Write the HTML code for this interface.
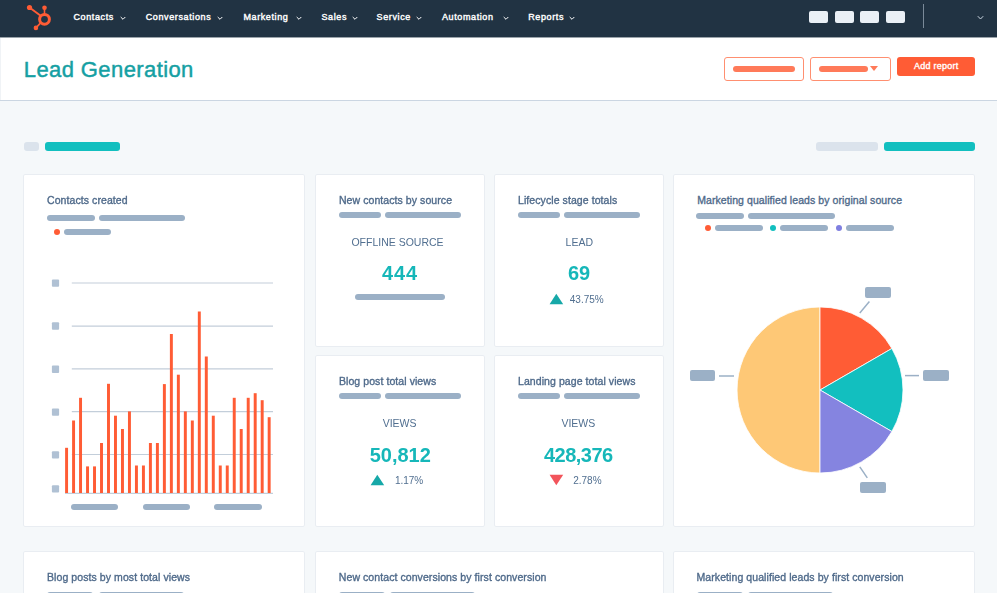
<!DOCTYPE html><html><head><meta charset="utf-8"><style>
*{box-sizing:border-box;margin:0;padding:0}
html,body{width:997px;height:593px;overflow:hidden;background:#f5f8fa;font-family:"Liberation Sans",sans-serif;position:relative}
.a{position:absolute}
.nl{position:absolute;top:10.7px;color:#fff;font-size:9px;font-weight:400;line-height:12px;white-space:nowrap;letter-spacing:0.62px;-webkit-text-stroke:0.4px #fff}
.sq{position:absolute;top:11px;width:19px;height:12px;background:#eaf0f6;border-radius:2px}
.btn{position:absolute;top:57px;height:24px;border:1px solid #ff8f70;border-radius:3px;background:#fff}
.p{position:absolute;border-radius:3px;background:#9bb0c6;height:6px}
.card{position:absolute;background:#fff;border:1px solid #e9edf2;border-radius:2px}
.ct{position:absolute;font-size:10.5px;font-weight:400;color:#4f6a8a;white-space:nowrap;line-height:12px;-webkit-text-stroke:0.35px #4f6a8a;letter-spacing:0.08px}
.lbl{position:absolute;font-size:10.5px;color:#516f90;white-space:nowrap;line-height:12px}
.big{position:absolute;font-size:20px;font-weight:700;color:#16b7b9;white-space:nowrap;line-height:20px}
.pct{position:absolute;font-size:10px;color:#516f90;white-space:nowrap;line-height:12px;margin-top:1.3px}
.tk{position:absolute;left:52px;width:7px;height:7px;background:#b0c1d4;border-radius:1px}
.gl{position:absolute;left:72px;width:201px;height:1px;background:#c8d3df}
.bar{position:absolute;width:3px;background:#ff5c35}
</style></head><body><div id="w" style="position:absolute;left:0;top:0;width:997px;height:593px;overflow:hidden;filter:blur(0.35px)">
<div class="a" style="left:0;top:0;width:997px;height:37px;background:#213343"></div>
<svg class="a" style="left:0;top:0" width="70" height="37" viewBox="0 0 70 37">
<g fill="#ff5c35" stroke="#ff5c35">
<circle cx="44.5" cy="19.3" r="4.9" fill="none" stroke-width="3"/>
<circle cx="29.5" cy="7.5" r="2.6" stroke="none"/>
<circle cx="44.5" cy="7.8" r="2.3" stroke="none"/>
<circle cx="35.9" cy="27.9" r="2.3" stroke="none"/>
<line x1="29.5" y1="7.5" x2="41" y2="16" stroke-width="2"/>
<line x1="44.5" y1="7.8" x2="44.5" y2="14" stroke-width="1.6"/>
<line x1="35.9" y1="27.9" x2="41" y2="22.5" stroke-width="1.8"/>
</g></svg>
<div class="nl" style="left:73.5px">Contacts</div>
<svg class="a" style="left:120px;top:15.6px" width="6" height="5" viewBox="0 0 6 5"><path d="M0.7 1 L3 3.3 L5.3 1" fill="none" stroke="#fff" stroke-width="1"/></svg>
<div class="nl" style="left:145.7px">Conversations</div>
<svg class="a" style="left:217px;top:15.6px" width="6" height="5" viewBox="0 0 6 5"><path d="M0.7 1 L3 3.3 L5.3 1" fill="none" stroke="#fff" stroke-width="1"/></svg>
<div class="nl" style="left:243.4px">Marketing</div>
<svg class="a" style="left:296px;top:15.6px" width="6" height="5" viewBox="0 0 6 5"><path d="M0.7 1 L3 3.3 L5.3 1" fill="none" stroke="#fff" stroke-width="1"/></svg>
<div class="nl" style="left:321.5px">Sales</div>
<svg class="a" style="left:351.6px;top:15.6px" width="6" height="5" viewBox="0 0 6 5"><path d="M0.7 1 L3 3.3 L5.3 1" fill="none" stroke="#fff" stroke-width="1"/></svg>
<div class="nl" style="left:376.6px">Service</div>
<svg class="a" style="left:416px;top:15.6px" width="6" height="5" viewBox="0 0 6 5"><path d="M0.7 1 L3 3.3 L5.3 1" fill="none" stroke="#fff" stroke-width="1"/></svg>
<div class="nl" style="left:441.9px">Automation</div>
<svg class="a" style="left:502.7px;top:15.6px" width="6" height="5" viewBox="0 0 6 5"><path d="M0.7 1 L3 3.3 L5.3 1" fill="none" stroke="#fff" stroke-width="1"/></svg>
<div class="nl" style="left:528.2px">Reports</div>
<svg class="a" style="left:569px;top:15.6px" width="6" height="5" viewBox="0 0 6 5"><path d="M0.7 1 L3 3.3 L5.3 1" fill="none" stroke="#fff" stroke-width="1"/></svg>
<div class="sq" style="left:809.4px"></div>
<div class="sq" style="left:835px"></div>
<div class="sq" style="left:860px"></div>
<div class="sq" style="left:886px"></div>
<div class="a" style="left:922.5px;top:4px;width:1px;height:24px;background:#7a8a99"></div>
<svg class="a" style="left:977px;top:15px" width="7" height="6" viewBox="0 0 7 6"><path d="M0.8 1.2 L3.5 4 L6.2 1.2" fill="none" stroke="#cbd6e2" stroke-width="1"/></svg>
<div class="a" style="left:0;top:37px;width:997px;height:64px;background:#fff;border-bottom:1px solid #cbd6e2"></div>
<div class="a" style="left:0;top:37px;width:997px;height:1px;background:#9aa3aa"></div>
<div class="a" style="left:0;top:38px;width:1px;height:62px;background:#f0f3f6"></div>
<div class="a" style="left:23.8px;top:55px;font-size:22px;color:#15a0a3;line-height:30px;white-space:nowrap;letter-spacing:0.4px;-webkit-text-stroke:0.45px #15a0a3">Lead Generation</div>
<div class="btn" style="left:724px;width:80px"></div>
<div class="a" style="left:733px;top:65.8px;width:62px;height:6px;border-radius:3px;background:#ff7a59"></div>
<div class="btn" style="left:810px;width:81px"></div>
<div class="a" style="left:819px;top:65.8px;width:49px;height:6px;border-radius:3px;background:#ff7a59"></div>
<svg class="a" style="left:869px;top:66px" width="10" height="6" viewBox="0 0 10 6"><path d="M1 0 L9 0 L5 5 Z" fill="#ff7a59"/></svg>
<div class="a" style="left:896.5px;top:57px;width:78px;height:19px;background:#ff5c35;border-radius:3px"></div>
<div class="a" style="left:914px;top:61.3px;font-size:9px;color:#fff;font-weight:400;line-height:10px;white-space:nowrap;letter-spacing:0.25px;-webkit-text-stroke:0.35px #fff">Add report</div>
<div class="a" style="left:24px;top:142px;width:15px;height:8.5px;border-radius:3px;background:#dbe3ec"></div>
<div class="a" style="left:44.5px;top:142px;width:75.5px;height:9px;border-radius:3px;background:#12bfbf"></div>
<div class="a" style="left:816px;top:142px;width:62px;height:8.5px;border-radius:3px;background:#dbe3ec"></div>
<div class="a" style="left:884px;top:142px;width:90.5px;height:9px;border-radius:3px;background:#12bfbf"></div>
<div class="card" style="left:23px;top:174px;width:282px;height:353px"></div>
<div class="card" style="left:315px;top:174px;width:170px;height:173px"></div>
<div class="card" style="left:494px;top:174px;width:170px;height:173px"></div>
<div class="card" style="left:673px;top:174px;width:301.5px;height:353px"></div>
<div class="card" style="left:315px;top:355px;width:170px;height:172px"></div>
<div class="card" style="left:494px;top:355px;width:170px;height:172px"></div>
<div class="card" style="left:23px;top:551px;width:282px;height:69px"></div>
<div class="card" style="left:315px;top:551px;width:349px;height:69px"></div>
<div class="card" style="left:673px;top:551px;width:301.5px;height:69px"></div>
<div class="ct" style="left:47px;top:194px">Contacts created</div>
<div class="p" style="left:47.2px;top:215.2px;width:47.39999999999999px;height:6px"></div>
<div class="p" style="left:98.9px;top:215.2px;width:86.1px;height:6px"></div>
<div class="a" style="left:54px;top:229px;width:6px;height:6px;border-radius:50%;background:#ff5c35"></div>
<div class="p" style="left:64px;top:228.7px;width:47.400000000000006px;height:6px"></div>
<svg class="a" style="left:0;top:0" width="300" height="593" viewBox="0 0 300 593">
<rect x="51.9" y="279.4" width="7.2" height="7.4" rx="1" fill="#b0c1d4"/>
<rect x="51.9" y="322.3" width="7.2" height="7.4" rx="1" fill="#b0c1d4"/>
<rect x="51.9" y="365.5" width="7.2" height="7.4" rx="1" fill="#b0c1d4"/>
<rect x="51.9" y="408.4" width="7.2" height="7.4" rx="1" fill="#b0c1d4"/>
<rect x="51.9" y="451.2" width="7.2" height="7.4" rx="1" fill="#b0c1d4"/>
<rect x="51.9" y="485.2" width="7.2" height="7.4" rx="1" fill="#b0c1d4"/>
</svg>
<svg class="a" style="left:0;top:0" width="300" height="593" viewBox="0 0 300 593"><g stroke="#c3ceda" stroke-width="1.2">
<line x1="71.8" y1="283" x2="273" y2="283"/>
<line x1="71.8" y1="326.1" x2="273" y2="326.1"/>
<line x1="71.8" y1="368.9" x2="273" y2="368.9"/>
<line x1="71.8" y1="411.7" x2="273" y2="411.7"/>
<line x1="71.8" y1="454.5" x2="273" y2="454.5"/>
<line x1="65" y1="493.4" x2="273" y2="493.4"/>
</g></svg>
<svg class="a" style="left:0;top:0" width="300" height="593" viewBox="0 0 300 593">
<rect x="65.10" y="447.8" width="2.95" height="45.20" fill="#ff5c35"/>
<rect x="72.09" y="420.5" width="2.95" height="72.50" fill="#ff5c35"/>
<rect x="79.07" y="397.8" width="2.95" height="95.20" fill="#ff5c35"/>
<rect x="86.06" y="466.4" width="2.95" height="26.60" fill="#ff5c35"/>
<rect x="93.04" y="466.4" width="2.95" height="26.60" fill="#ff5c35"/>
<rect x="100.03" y="443" width="2.95" height="50.00" fill="#ff5c35"/>
<rect x="107.02" y="383.8" width="2.95" height="109.20" fill="#ff5c35"/>
<rect x="114.00" y="415.7" width="2.95" height="77.30" fill="#ff5c35"/>
<rect x="120.99" y="429" width="2.95" height="64.00" fill="#ff5c35"/>
<rect x="127.97" y="411.4" width="2.95" height="81.60" fill="#ff5c35"/>
<rect x="134.96" y="465.5" width="2.95" height="27.50" fill="#ff5c35"/>
<rect x="141.95" y="465.5" width="2.95" height="27.50" fill="#ff5c35"/>
<rect x="148.93" y="443" width="2.95" height="50.00" fill="#ff5c35"/>
<rect x="155.92" y="443" width="2.95" height="50.00" fill="#ff5c35"/>
<rect x="162.90" y="384.1" width="2.95" height="108.90" fill="#ff5c35"/>
<rect x="169.89" y="334" width="2.95" height="159.00" fill="#ff5c35"/>
<rect x="176.88" y="374.7" width="2.95" height="118.30" fill="#ff5c35"/>
<rect x="183.86" y="411.4" width="2.95" height="81.60" fill="#ff5c35"/>
<rect x="190.85" y="420.5" width="2.95" height="72.50" fill="#ff5c35"/>
<rect x="197.83" y="311.5" width="2.95" height="181.50" fill="#ff5c35"/>
<rect x="204.82" y="356.5" width="2.95" height="136.50" fill="#ff5c35"/>
<rect x="211.81" y="415.7" width="2.95" height="77.30" fill="#ff5c35"/>
<rect x="218.79" y="465.5" width="2.95" height="27.50" fill="#ff5c35"/>
<rect x="225.78" y="465.5" width="2.95" height="27.50" fill="#ff5c35"/>
<rect x="232.76" y="397.8" width="2.95" height="95.20" fill="#ff5c35"/>
<rect x="239.75" y="429" width="2.95" height="64.00" fill="#ff5c35"/>
<rect x="246.74" y="397.8" width="2.95" height="95.20" fill="#ff5c35"/>
<rect x="253.72" y="393.2" width="2.95" height="99.80" fill="#ff5c35"/>
<rect x="260.71" y="400.2" width="2.95" height="92.80" fill="#ff5c35"/>
<rect x="267.69" y="417.2" width="2.95" height="75.80" fill="#ff5c35"/>
</svg>
<div class="p" style="left:71px;top:503.9px;width:47.400000000000006px;height:6px"></div>
<div class="p" style="left:142.9px;top:503.9px;width:47.400000000000006px;height:6px"></div>
<div class="p" style="left:214.4px;top:503.9px;width:47.29999999999998px;height:6px"></div>
<div class="ct" style="left:338.9px;top:194px">New contacts by source</div>
<div class="p" style="left:338.9px;top:211.9px;width:42.30000000000001px;height:6px"></div>
<div class="p" style="left:384.6px;top:211.9px;width:76.59999999999997px;height:6px"></div>
<div class="lbl" style="left:351.4px;top:236px">OFFLINE SOURCE</div>
<div class="big" style="left:382px;top:263.3px;letter-spacing:0.9px">444</div>
<div class="p" style="left:354.5px;top:294.2px;width:90.30000000000001px;height:6px"></div>
<div class="ct" style="left:518px;top:194px">Lifecycle stage totals</div>
<div class="p" style="left:518px;top:211.9px;width:42.299999999999955px;height:6px"></div>
<div class="p" style="left:563.7px;top:211.9px;width:76.29999999999995px;height:6px"></div>
<div class="lbl" style="left:565.6px;top:236px">LEAD</div>
<div class="big" style="left:568px;top:263.3px">69</div>
<svg class="a" style="left:549px;top:293px" width="15" height="12" viewBox="0 0 15 12"><path d="M7.3 0.8 L14.2 11.2 L0.6 11.2 Z" fill="#16a8a8"/></svg>
<div class="pct" style="left:569.8px;top:293px">43.75%</div>
<div class="ct" style="left:338.9px;top:375px">Blog post total views</div>
<div class="p" style="left:338.9px;top:393px;width:42.30000000000001px;height:6px"></div>
<div class="p" style="left:384.6px;top:393px;width:76.59999999999997px;height:6px"></div>
<div class="lbl" style="left:382.7px;top:417px">VIEWS</div>
<div class="big" style="left:369.7px;top:444.5px">50,812</div>
<svg class="a" style="left:370px;top:474px" width="15" height="12" viewBox="0 0 15 12"><path d="M7.3 0.8 L14.2 11.2 L0.6 11.2 Z" fill="#16a8a8"/></svg>
<div class="pct" style="left:394.9px;top:474px">1.17%</div>
<div class="ct" style="left:518px;top:375px">Landing page total views</div>
<div class="p" style="left:518px;top:393px;width:42.299999999999955px;height:6px"></div>
<div class="p" style="left:563.7px;top:393px;width:76.29999999999995px;height:6px"></div>
<div class="lbl" style="left:561.4px;top:417px">VIEWS</div>
<div class="big" style="left:543.9px;top:444.5px;letter-spacing:-0.5px">428,376</div>
<svg class="a" style="left:549px;top:474px" width="15" height="12" viewBox="0 0 15 12"><path d="M0.6 0.8 L14.2 0.8 L7.3 11.2 Z" fill="#f2545b"/></svg>
<div class="pct" style="left:573.2px;top:474px">2.78%</div>
<div class="ct" style="left:697.2px;top:194px">Marketing qualified leads by original source</div>
<div class="p" style="left:696.2px;top:212.6px;width:48.299999999999955px;height:6px"></div>
<div class="p" style="left:748px;top:212.6px;width:86.60000000000002px;height:6px"></div>
<div class="a" style="left:704.7px;top:225px;width:6px;height:6px;border-radius:50%;background:#ff5c35"></div>
<div class="p" style="left:715px;top:225.1px;width:47.5px;height:6px"></div>
<div class="a" style="left:770.3px;top:225px;width:6px;height:6px;border-radius:50%;background:#12bfbf"></div>
<div class="p" style="left:780.2px;top:225.1px;width:47.799999999999955px;height:6px"></div>
<div class="a" style="left:835.9px;top:225px;width:6px;height:6px;border-radius:50%;background:#7f7fe0"></div>
<div class="p" style="left:845.8px;top:225.1px;width:47.90000000000009px;height:6px"></div>
<svg class="a" style="left:0;top:0" width="997" height="593" viewBox="0 0 997 593">
<path d="M820 390 L820.00 473.00 A83 83 0 0 1 820.00 307.00 Z" fill="#fec876" stroke="#fff" stroke-width="0.8"/>
<path d="M820 390 L820.00 307.00 A83 83 0 0 1 891.88 348.50 Z" fill="#ff5c35" stroke="#fff" stroke-width="0.8"/>
<path d="M820 390 L891.88 348.50 A83 83 0 0 1 891.88 431.50 Z" fill="#12bfbf" stroke="#fff" stroke-width="0.8"/>
<path d="M820 390 L891.88 431.50 A83 83 0 0 1 820.00 473.00 Z" fill="#8584e0" stroke="#fff" stroke-width="0.8"/>
<g stroke="#9bb0c6" stroke-width="1.5">
<line x1="869.4" y1="301.6" x2="859.8" y2="313"/>
<line x1="859.8" y1="466.8" x2="867.3" y2="477.8"/>
<line x1="719" y1="376" x2="734" y2="376"/>
<line x1="905" y1="375.6" x2="919" y2="375.6"/>
</g>
</svg>
<div class="a" style="left:865px;top:287px;width:25.5px;height:11.0px;background:#9bb0c6;border-radius:2px"></div>
<div class="a" style="left:689.7px;top:370.4px;width:25.4px;height:10.5px;background:#9bb0c6;border-radius:2px"></div>
<div class="a" style="left:922.9px;top:370.4px;width:25.9px;height:10.5px;background:#9bb0c6;border-radius:2px"></div>
<div class="a" style="left:860.2px;top:482.2px;width:25.9px;height:10.5px;background:#9bb0c6;border-radius:2px"></div>
<div class="ct" style="left:47px;top:571px">Blog posts by most total views</div>
<div class="ct" style="left:338.8px;top:571px">New contact conversions by first conversion</div>
<div class="ct" style="left:696.5px;top:571px">Marketing qualified leads by first conversion</div>
<div class="p" style="left:47px;top:592.3px;width:46px;height:6px"></div>
<div class="p" style="left:98.5px;top:592.3px;width:85.0px;height:6px"></div>
<div class="p" style="left:338.8px;top:592.3px;width:46.0px;height:6px"></div>
<div class="p" style="left:390.3px;top:592.3px;width:85.0px;height:6px"></div>
<div class="p" style="left:696.5px;top:592.3px;width:46.0px;height:6px"></div>
<div class="p" style="left:748.0px;top:592.3px;width:85.0px;height:6px"></div>
</div></body></html>
